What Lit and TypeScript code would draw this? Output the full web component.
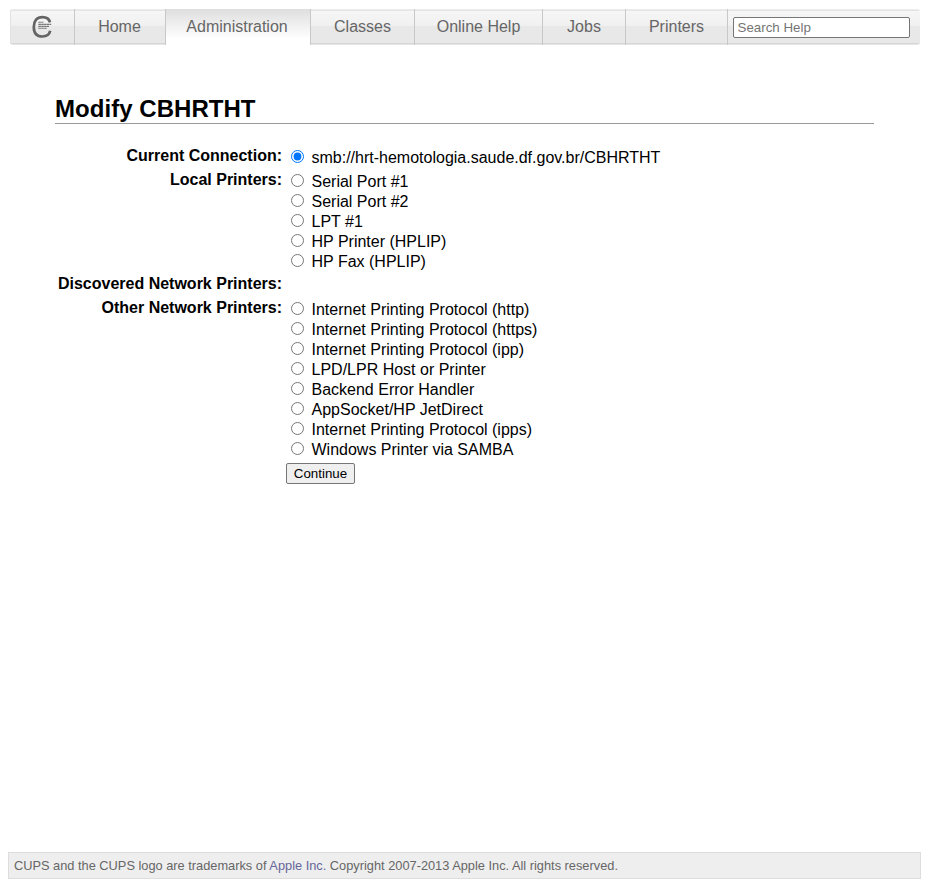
import { LitElement, html, css, svg } from "lit";
import { customElement } from "lit/decorators.js";

interface Group { label: string; options: string[]; checked?: boolean }

const TABS = [
  { name: "Home", cls: "home" },
  { name: "Administration", cls: "admin" },
  { name: "Classes", cls: "classes" },
  { name: "Online Help", cls: "help" },
  { name: "Jobs", cls: "jobs" },
  { name: "Printers", cls: "printers" },
];

const GROUPS: Group[] = [
  { label: "Current Connection:", options: ["smb://hrt-hemotologia.saude.df.gov.br/CBHRTHT"], checked: true },
  { label: "Local Printers:", options: ["Serial Port #1", "Serial Port #2", "LPT #1", "HP Printer (HPLIP)", "HP Fax (HPLIP)"] },
  { label: "Discovered Network Printers:", options: [] },
  {
    label: "Other Network Printers:",
    options: [
      "Internet Printing Protocol (http)", "Internet Printing Protocol (https)", "Internet Printing Protocol (ipp)",
      "LPD/LPR Host or Printer", "Backend Error Handler", "AppSocket/HP JetDirect",
      "Internet Printing Protocol (ipps)", "Windows Printer via SAMBA",
    ],
  },
];

@customElement("app-root")
export class AppRoot extends LitElement {
  static styles = css`
    :host { display: flex; flex-direction: column; box-sizing: border-box; width: 929px; height: 887px; padding: 9px 8px 8px; background: #fff; color: #000; font: 16px/20px "Liberation Sans", Arial, sans-serif; }
    * { box-sizing: border-box; }
    .bar { display: flex; height: 36px; margin: 0 1px 0 2px; flex: none; border-radius: 3px; overflow: hidden;
      background: linear-gradient(#ececec 0 1px, #e4e4e4 1px 2px, #f6f6f6 2px, #f0f0f0 17px, #e8e8e8 17px, #e8e8e8 34px, #d6d6d6 34px 35px, #e6e6e6 35px); }
    .tab { flex: none; border-right: 1px solid #c8c8c8; color: #666; text-decoration: none; text-align: center; line-height: 35px; }
    .logo { width: 65px; display: flex; justify-content: center; padding: 6px 2px 0 0; border-left: 1px solid #e2e2e2; }
    .home { width: 91px; padding-right: 1px; }
    .admin { width: 145px; padding-right: 2px; background: linear-gradient(#dedede, #fff 30px); }
    .classes { width: 104px; }
    .help { width: 128px; }
    .jobs { width: 83px; }
    .printers { width: 102px; }
    .search { flex: 1; padding: 8px 10px 0 5px; border-right: 1px solid #e2e2e2; }
    .field { display: block; width: 177px; height: 21px; border: 1px solid #767676; border-radius: 2px; padding: 1px 3px 1px 3.5px; margin: 0; background: #fff; font: 13.333px "Liberation Sans", Arial, sans-serif; outline: none; }
    .field::placeholder { color: #757575; }
    .main { flex: 1; padding: 50px 47px 0; }
    .title { margin: 0 0 21px; height: 29px; border-bottom: 1px solid #999; font-size: 24px; line-height: 28px; font-weight: bold; letter-spacing: .04px; }
    .form { display: grid; grid-template-columns: 227px 1fr; column-gap: 4px; row-gap: 4px; padding-top: 2px; }
    .label { text-align: right; font-weight: bold; line-height: 18px; white-space: nowrap; }
    .options { min-height: 20px; }
    .option { display: flex; height: 20px; align-items: center; white-space: nowrap; }
    .name { line-height: 18px; padding-top: 2px; }
    .radio { flex: none; width: 13px; height: 13px; margin: 0 7.5px 2px 5px; }
    .radio:checked { accent-color: #0075ff; }
    .go { grid-column: 2; justify-self: start; width: 69px; height: 21px; padding: 0; border: 1px solid #767676; border-radius: 2px; background: #efefef; color: #000; font: 13.333px "Liberation Sans", Arial, sans-serif; }
    .foot { flex: none; height: 27px; padding: 0 5px; border: 1px solid #ddd; background: #eee; color: #666; font-size: 12.8px; line-height: 25px; }
    .link { color: #666699; text-decoration: none; }
  `;

  private logo() {
    return svg`<svg width="20" height="24" viewBox="0 0 20 24">
      <path d="M18 7.4C17.2 3.9 14.4 2.1 10.4 2.1C4.9 2.1 1.8 5.8 1.8 12C1.8 18.2 4.9 21.5 10.4 21.5C14.5 21.5 17.4 19.6 18.2 15.8" fill="none" stroke="#646464" stroke-width="2.7"/>
      <path d="M6.3 7.3H11.4M6.3 9.4H19.2M6.3 11.4H17M6.3 13.3H15" fill="none" stroke="#777" stroke-width="1.1" stroke-dasharray="2.6 .3"/>
    </svg>`;
  }

  render() {
    return html`
      <nav class="bar">
        <a class="tab logo" aria-label="CUPS">${this.logo()}</a>
        ${TABS.map((t) => html`<a class="tab ${t.cls}">${t.name}</a>`)}
        <div class="search"><input class="field" placeholder="Search Help" /></div>
      </nav>
      <main class="main">
        <h2 class="title">Modify CBHRTHT</h2>
        <form class="form">
          ${GROUPS.map((g) => html`
            <div class="label">${g.label}</div>
            <div class="options">
              ${g.options.map((o) => html`<label class="option"><input class="radio" type="radio" name="device" ?checked=${g.checked} /><span class="name">${o}</span></label>`)}
            </div>`)}
          <button class="go" type="button">Continue</button>
        </form>
      </main>
      <footer class="foot">CUPS and the CUPS logo are trademarks of <a class="link">Apple Inc.</a> Copyright 2007-2013 Apple Inc. All rights reserved.</footer>
    `;
  }
}
